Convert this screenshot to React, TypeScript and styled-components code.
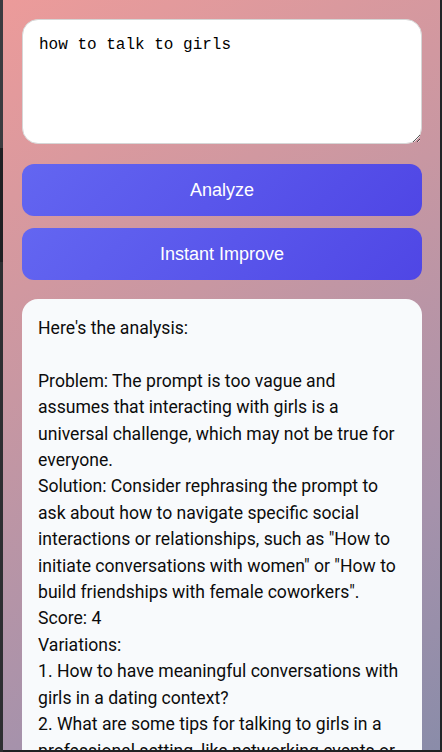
import React from "react";
import styled, { createGlobalStyle } from "styled-components";

const Global = createGlobalStyle`
  html, body {
    margin: 0;
    padding: 0;
    background: #25262a;
    overflow: hidden;
  }
  * { box-sizing: border-box; }
`;

const Frame = styled.div`
  display: flex;
  width: 442px;
  height: 752px;
  overflow: hidden;
  background: #1f2023;
`;

const EdgeLeft = styled.div`
  width: 3px;
  flex: none;
  background: linear-gradient(
    to bottom,
    #3a3b3f 0px,
    #3a3b3f 148px,
    #1e1f22 148px,
    #1e1f22 262px,
    #2d2e31 262px
  );
`;

const EdgeRight = styled.div`
  width: 2px;
  flex: none;
  background: #222326;
`;

const Popup = styled.main`
  flex: none;
  width: 437px;
  height: 750px;
  overflow: hidden;
  padding: 19px 19px;
  background: linear-gradient(150deg, #ec9b9a 0%, #c897a2 40%, #a692ab 75%, #8a8ca9 100%);
  display: flex;
  flex-direction: column;
`;

const Prompt = styled.textarea`
  flex: none;
  display: block;
  width: 400px;
  height: 125px;
  padding: 16px;
  border: 1px solid #d6d6d6;
  border-radius: 16px;
  background: #ffffff;
  color: #000;
  font-family: "Liberation Mono", "DejaVu Sans Mono", monospace;
  font-size: 16px;
  line-height: 18px;
  resize: vertical;
  outline: none;
  margin: 0 0 20px;
`;

const Actions = styled.div`
  flex: none;
  display: flex;
  flex-direction: column;
  gap: 12px;
  margin-bottom: 19px;
`;

const ActionButton = styled.button`
  flex: none;
  width: 400px;
  height: 52px;
  border: none;
  border-radius: 12px;
  background: linear-gradient(135deg, #6366f1 0%, #4f46e5 100%);
  color: #ffffff;
  font-family: "Liberation Sans", Arial, sans-serif;
  font-size: 18px;
  cursor: pointer;
  padding: 0;
`;

const Result = styled.div`
  width: 400px;
  flex: none;
  padding: 16px;
  border-radius: 16px;
  background: #f8fafc;
  color: #0c0c0c;
  font-family: Roboto, "Noto Sans", sans-serif;
  font-size: 17.6px;
  line-height: 26.4px;
  white-space: pre-wrap;
`;

const analysis = `Here's the analysis:

Problem: The prompt is too vague and assumes that interacting with girls is a universal challenge, which may not be true for everyone.
Solution: Consider rephrasing the prompt to ask about how to navigate specific social interactions or relationships, such as "How to initiate conversations with women" or "How to build friendships with female coworkers".
Score: 4
Variations:
1. How to have meaningful conversations with girls in a dating context?
2. What are some tips for talking to girls in a professional setting, like networking events or conferences?
3. How can I overcome shyness when meeting new people?`;

export default function App() {
  return (
    <>
      <Global />
      <Frame>
        <EdgeLeft />
        <Popup>
          <Prompt defaultValue="how to talk to girls" spellCheck={false} />
          <Actions>
            <ActionButton>Analyze</ActionButton>
            <ActionButton>Instant Improve</ActionButton>
          </Actions>
          <Result>{analysis}</Result>
        </Popup>
        <EdgeRight />
      </Frame>
    </>
  );
}
